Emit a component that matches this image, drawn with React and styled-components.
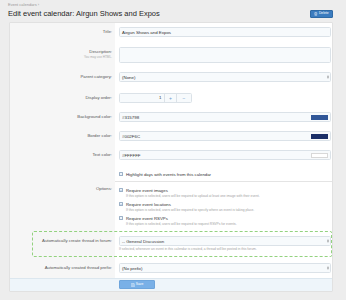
import React from "react";
import styled, { createGlobalStyle } from "styled-components";

const Global = createGlobalStyle`
  html, body { margin: 0; padding: 0; background: #ededed; }
  body { font-family: "Liberation Sans", Arial, Helvetica, sans-serif; color: #222; }
  * { box-sizing: border-box; }
`;

const Page = styled.div`
  width: 346px;
  min-height: 300px;
  padding: 2px 13px 12px 9px;
`;

const Header = styled.header`
  margin-left: -1px;
  display: flex;
  flex-direction: column;
`;

const Breadcrumb = styled.div`
  font-size: 4px;
  line-height: 5px;
  color: #999;
`;

const TitleBar = styled.div`
  display: flex;
  align-items: center;
  justify-content: space-between;
  height: 10px;
  margin: 2px 0 3px;
`;

const Heading = styled.h1`
  margin: 0;
  font-size: 7.5px;
  font-weight: 400;
  color: #1f1f1f;
  line-height: 10px;
`;

const ActionButton = styled.button`
  display: flex;
  align-items: center;
  justify-content: center;
  gap: 1px;
  width: ${(p) => p.$w}px;
  height: ${(p) => p.$h}px;
  padding: 0 2px;
  border: 0.5px solid ${(p) => p.$border};
  border-radius: 1px;
  background: ${(p) => p.$bg};
  color: #fff;
  font-family: inherit;
  font-size: 3.4px;
  line-height: 1;
  cursor: pointer;
  svg { flex: none; }
`;

const Form = styled.form`
  display: flex;
  flex-direction: column;
  background: #fff;
  border: 1px solid #e1e1e1;
  border-radius: 1px;
  overflow: hidden;
`;

const Row = styled.div`
  position: relative;
  display: grid;
  grid-template-columns: 105px 1fr;

  ${(p) =>
    p.$highlight &&
    `
    &::after {
      content: "";
      position: absolute;
      left: 22px;
      right: 0;
      top: 0;
      bottom: 0;
      border: 0.75px dashed #93d27f;
      border-radius: 2px;
      pointer-events: none;
    }
  `}
`;

const LabelCell = styled.div`
  background: #f6f6f6;
  padding: ${(p) => p.$pt}px 3px 0 0;
  text-align: right;
  font-size: 4.3px;
  line-height: ${(p) => p.$lh}px;
  color: #555;
`;

const LabelHint = styled.div`
  font-size: 3.1px;
  line-height: 4px;
  margin-top: -2px;
  color: #aaa;
`;

const ValueCell = styled.div`
  display: flex;
  flex-direction: column;
  padding: ${(p) => p.$pt}px 1px ${(p) => p.$pb}px 4px;
  border-top: ${(p) => (p.$sep ? "0.5px solid #e4e4e4" : "none")};
`;

const Field = styled.div`
  display: flex;
  align-items: center;
  justify-content: space-between;
  height: ${(p) => p.$h || 10}px;
  padding: 0 1.5px 0 2px;
  background: #f7fafc;
  border: 0.5px solid #dbe2e8;
  border-radius: 1.5px;
  font-size: 4.4px;
  color: #333;
`;

const Swatch = styled.span`
  width: 17px;
  height: 5px;
  margin-right: 1px;
  background: ${(p) => p.$color};
  border: ${(p) => (p.$outlined ? "0.5px solid #d8d8d8" : "none")};
`;

const NumberBox = styled.div`
  display: flex;
  width: 73px;
  height: 10px;
  background: #f7fafc;
  border: 0.5px solid #dbe2e8;
  border-radius: 1.5px;
  font-size: 4.4px;
  color: #333;
`;

const NumberValue = styled.span`
  flex: 1;
  display: flex;
  align-items: center;
  justify-content: flex-end;
  padding-right: 2.5px;
`;

const Stepper = styled.span`
  width: ${(p) => p.$w}px;
  display: flex;
  align-items: center;
  justify-content: center;
  border-left: 0.5px solid #dbe2e8;
  color: #6b9bd0;
  font-size: 5px;
`;

const CheckList = styled.div`
  display: flex;
  flex-direction: column;
  gap: 2px;
`;

const CheckItem = styled.div`
  display: flex;
  flex-direction: column;
`;

const CheckLine = styled.label`
  display: flex;
  align-items: center;
  gap: 3px;
  height: 6px;
  font-size: 4.3px;
  color: #333;
`;

const Box = styled.span`
  width: 4px;
  height: 4px;
  flex: none;
  display: flex;
  align-items: center;
  justify-content: center;
  border: 0.5px solid #9db2c8;
  border-radius: 0.6px;
  background: #eef4fa;
`;

const Hint = styled.div`
  font-size: 3.3px;
  line-height: ${(p) => p.$lh || 6}px;
  margin-left: ${(p) => p.$indent || 0}px;
  margin-top: ${(p) => p.$mt || 0}px;
  color: #a2a2a2;
`;

const SubmitRow = styled.div`
  display: grid;
  grid-template-columns: 105px 1fr;
  background: #eef5fa;
  border-top: 0.5px solid #dce7ef;
  padding: 1px 0 2px;
`;

const SubmitCell = styled.div`
  grid-column: 2;
  padding-left: 4px;
`;

const SelectArrows = () => (
  <svg width="2" height="4" viewBox="0 0 4 8">
    <path d="M0.3 3.2 L2 1 L3.7 3.2 Z M0.3 4.8 L2 7 L3.7 4.8 Z" fill="#444" />
  </svg>
);

const Check = () => (
  <svg width="3" height="3" viewBox="0 0 10 10">
    <path d="M1.5 5.2 L4 7.6 L8.6 2.4" fill="none" stroke="#4f86bf" strokeWidth="1.6" />
  </svg>
);

const TrashIcon = () => (
  <svg width="3.6" height="4" viewBox="0 0 10 11">
    <path d="M1 2.5 H9 M3.5 2.5 V1 H6.5 V2.5 M2 2.5 L2.6 10 H7.4 L8 2.5 M4 4.5 V8.5 M6 4.5 V8.5" fill="none" stroke="#fff" strokeWidth="1" />
  </svg>
);

const SaveIcon = () => (
  <svg width="4" height="4" viewBox="0 0 10 10">
    <path d="M1 1 H7.5 L9 2.5 V9 H1 Z M3 1 V3.5 H7 V1 M3 9 V6 H7 V9" fill="none" stroke="#fff" strokeWidth="0.9" />
  </svg>
);

const TextRow = ({ label, hint, pt, pb, lh = 10, sep, children, highlight }) => (
  <Row $highlight={highlight}>
    <LabelCell $pt={pt} $lh={lh}>
      {label}
      {hint && <LabelHint>{hint}</LabelHint>}
    </LabelCell>
    <ValueCell $pt={pt} $pb={pb} $sep={sep}>
      {children}
    </ValueCell>
  </Row>
);

const CheckOption = ({ checked, label, hint }) => (
  <CheckItem>
    <CheckLine>
      <Box>{checked && <Check />}</Box>
      {label}
    </CheckLine>
    {hint && <Hint $indent={7}>{hint}</Hint>}
  </CheckItem>
);

export default function App() {
  return (
    <>
      <Global />
      <Page>
        <Header>
          <Breadcrumb>Event calendars ›</Breadcrumb>
          <TitleBar>
            <Heading>Edit event calendar: Airgun Shows and Expos</Heading>
            <ActionButton type="button" $w={23} $h={8} $bg="#3b7cbf" $border="#2f6aa5">
              <TrashIcon />
              Delete
            </ActionButton>
          </TitleBar>
        </Header>

        <Form onSubmit={(e) => e.preventDefault()}>
          <TextRow label="Title:" pt={4} pb={5}>
            <Field>Airgun Shows and Expos</Field>
          </TextRow>
          <TextRow label="Description:" hint="You may use HTML." pt={5} pb={4.5}>
            <Field $h={16} />
          </TextRow>
          <TextRow label="Parent category:" pt={4.5} pb={5}>
            <Field>
              (None)
              <SelectArrows />
            </Field>
          </TextRow>
          <TextRow label="Display order:" pt={5.5} pb={4.75}>
            <NumberBox>
              <NumberValue>1</NumberValue>
              <Stepper $w={12}>+</Stepper>
              <Stepper $w={15}>−</Stepper>
            </NumberBox>
          </TextRow>
          <TextRow label="Background color:" pt={4.75} pb={4.5}>
            <Field>
              #315798
              <Swatch $color="#315798" />
            </Field>
          </TextRow>
          <TextRow label="Border color:" pt={4.5} pb={4.5}>
            <Field>
              #002F6C
              <Swatch $color="#1b2f68" />
            </Field>
          </TextRow>
          <TextRow label="Text color:" pt={4.5} pb={4.5}>
            <Field>
              #FFFFFF
              <Swatch $color="#ffffff" $outlined />
            </Field>
          </TextRow>
          <TextRow label="" pt={6.5} pb={4} lh={6}>
            <CheckOption label="Highlight days with events from this calendar" />
          </TextRow>
          <TextRow label="Options:" pt={5} pb={4} lh={6} sep>
            <CheckList>
              <CheckOption
                checked
                label="Require event images"
                hint="If this option is selected, users will be required to upload at least one image with their event."
              />
              <CheckOption
                checked
                label="Require event locations"
                hint="If this option is selected, users will be required to specify where an event is taking place."
              />
              <CheckOption
                label="Require event RSVPs"
                hint="If this option is selected, users will be required to request RSVPs for events."
              />
            </CheckList>
          </TextRow>
          <TextRow label="Automatically create thread in forum:" pt={5} pb={5} highlight>
            <Field>
              -- General Discussion
              <SelectArrows />
            </Field>
            <Hint $lh={5} $mt={1}>
              If selected, whenever an event in this calendar is created, a thread will be posted in this forum.
            </Hint>
          </TextRow>
          <TextRow label="Automatically created thread prefix:" pt={6} pb={5}>
            <Field>
              (No prefix)
              <SelectArrows />
            </Field>
          </TextRow>
          <SubmitRow>
            <SubmitCell>
              <ActionButton type="submit" $w={36} $h={9} $bg="#79b0e7" $border="#6ea5dc">
                <SaveIcon />
                Save
              </ActionButton>
            </SubmitCell>
          </SubmitRow>
        </Form>
      </Page>
    </>
  );
}
